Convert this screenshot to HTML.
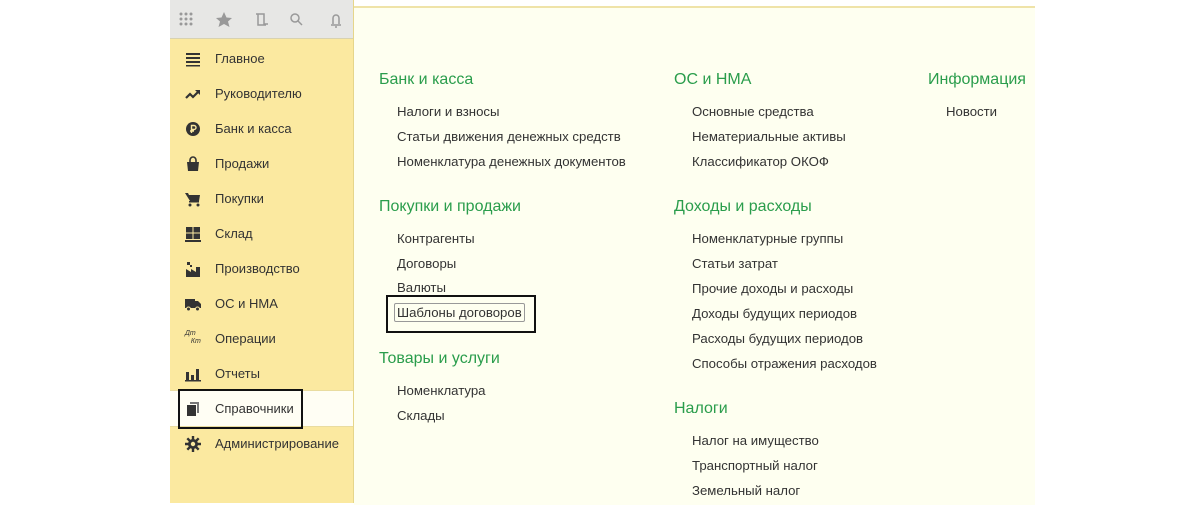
<html><head><style>
body{margin:0;width:1200px;height:507px;background:#fff;font-family:"Liberation Sans",sans-serif;position:relative;overflow:hidden}
.a{position:absolute;white-space:nowrap}
#sb{left:170px;top:0;width:183px;height:503px;background:#fbe9a0;border-right:1px solid #e6d68a}
#tb{left:170px;top:0;width:183px;height:38px;background:#e7e7e5;border-bottom:1px solid #d8d2b0}
#main{left:354px;top:6px;width:681px;height:497px;background:#fefff0;border-top:2px solid #efe3a8}
.si{font-size:13px;color:#333;left:215px}
.ic{left:185px;width:16px;height:16px}
.h{font-size:16px;color:#2a9d4c}
.i{font-size:13.2px;color:#333}
</style></head><body>
<div class="a" id="sb"></div>
<div class="a" id="tb"></div>
<div class="a" style="left:178px;top:12px">
<svg width="180" height="16"><g fill="#999">
<circle cx="3" cy="2" r="1.5"/><circle cx="8" cy="2" r="1.5"/><circle cx="13" cy="2" r="1.5"/><circle cx="3" cy="7" r="1.5"/><circle cx="8" cy="7" r="1.5"/><circle cx="13" cy="7" r="1.5"/><circle cx="3" cy="12" r="1.5"/><circle cx="8" cy="12" r="1.5"/><circle cx="13" cy="12" r="1.5"/>
<polygon points="46,0 48.5,5.5 54,6 50,9.5 51.5,15 46,12 40.5,15 42,9.5 38,6 43.5,5.5"/></g>
<g fill="none" stroke="#999" stroke-width="1.5"><path d="M78 2h8v10h4M80 2v11h8"/><circle cx="117" cy="6" r="4"/><path d="M120 9l4 4"/><path d="M153 13h10M155 12v-6a3 3 0 0 1 6 0v6M157 15h2"/></g></svg></div>
<div class="a" style="left:170px;top:390px;width:183px;height:35px;background:#fffef4;border-top:1px solid #e9dca0;border-bottom:1px solid #e9dca0"></div>
<div class="a" style="left:178px;top:389px;width:121px;height:36px;border:2px solid #111"></div>

<svg class="a ic" style="top:51px" viewBox="0 0 16 16"><g fill="#333"><rect x="1" y="2" width="14" height="2"/><rect x="1" y="6" width="14" height="2"/><rect x="1" y="10" width="14" height="2"/><rect x="1" y="14" width="14" height="1.5"/></g></svg>
<div class="a si" style="top:51px">Главное</div>
<svg class="a ic" style="top:86px" viewBox="0 0 16 16"><path d="M1 12l4-4 3 3 5-5" fill="none" stroke="#333" stroke-width="2.2"/><path d="M10 4h5v5z" fill="#333"/></svg>
<div class="a si" style="top:86px">Руководителю</div>
<svg class="a ic" style="top:121px" viewBox="0 0 16 16"><circle cx="8" cy="8" r="7" fill="#333"/><path d="M6.5 12V4.5h2.5a2 2 0 0 1 0 4H6.5M5 10h4" fill="none" stroke="#fbe9a0" stroke-width="1.4"/></svg>
<div class="a si" style="top:121px">Банк и касса</div>
<svg class="a ic" style="top:156px" viewBox="0 0 16 16"><path d="M2 6h12l-1 9H3z" fill="#333"/><path d="M5 7V4a3 3 0 0 1 6 0v3" fill="none" stroke="#333" stroke-width="1.6"/></svg>
<div class="a si" style="top:156px">Продажи</div>
<svg class="a ic" style="top:191px" viewBox="0 0 16 16"><path d="M0 2h3l1 2h11l-1 6H5z" fill="#333"/><rect x="4" y="10" width="10" height="1.5" fill="#333"/><circle cx="5" cy="14" r="1.5" fill="#333"/><circle cx="13" cy="14" r="1.5" fill="#333"/></svg>
<div class="a si" style="top:191px">Покупки</div>
<svg class="a ic" style="top:226px" viewBox="0 0 16 16"><g fill="#333"><rect x="1" y="1" width="6.5" height="5.5"/><rect x="8.5" y="1" width="6.5" height="5.5"/><rect x="1" y="7.5" width="6.5" height="5.5"/><rect x="8.5" y="7.5" width="6.5" height="5.5"/><rect x="0" y="14" width="16" height="2"/></g></svg>
<div class="a si" style="top:226px">Склад</div>
<svg class="a ic" style="top:261px" viewBox="0 0 16 16"><path d="M1 16V8l5 3V8l5 3V6h4v10z" fill="#333"/><rect x="2" y="1" width="3" height="3" fill="#333"/><rect x="5" y="4" width="2" height="2" fill="#333"/></svg>
<div class="a si" style="top:261px">Производство</div>
<svg class="a ic" style="top:296px" viewBox="0 0 16 16"><rect x="0" y="3" width="10" height="9" fill="#333"/><path d="M10 5h3l3 3v4h-6z" fill="#333"/><circle cx="3.5" cy="13" r="2" fill="#333" stroke="#fbe9a0"/><circle cx="12.5" cy="13" r="2" fill="#333" stroke="#fbe9a0"/></svg>
<div class="a si" style="top:296px">ОС и НМА</div>
<div class="a" style="left:185px;top:330px;font-size:7px;font-style:italic;color:#333;line-height:8px">Дт<br>&nbsp;&nbsp;&nbsp;Кт</div>
<div class="a si" style="top:331px">Операции</div>
<svg class="a ic" style="top:366px" viewBox="0 0 16 16"><g fill="#333"><rect x="1" y="6" width="3" height="8"/><rect x="6" y="9" width="3" height="5"/><rect x="11" y="3" width="3" height="11"/><rect x="0" y="14" width="16" height="1.5"/></g></svg>
<div class="a si" style="top:366px">Отчеты</div>
<svg class="a ic" style="top:401px" viewBox="0 0 16 16"><path d="M5 1h9v11h-2V3H5z" fill="#777"/><rect x="2" y="4" width="9" height="11" fill="#333"/></svg>
<div class="a si" style="top:401px">Справочники</div>
<svg class="a ic" style="top:436px" viewBox="0 0 16 16"><g stroke="#333" stroke-width="2.4"><path d="M8 0v16M0 8h16M2.3 2.3l11.4 11.4M13.7 2.3L2.3 13.7"/></g><circle cx="8" cy="8" r="5" fill="#333"/><circle cx="8" cy="8" r="2.2" fill="#fbe9a0"/></svg>
<div class="a si" style="top:436px">Администрирование</div>

<div class="a" id="main"></div>
<div class="a h" style="left:379px;top:71px">Банк и касса</div>
<div class="a i" style="left:397px;top:104px">Налоги и взносы</div>
<div class="a i" style="left:397px;top:129px">Статьи движения денежных средств</div>
<div class="a i" style="left:397px;top:154px">Номенклатура денежных документов</div>
<div class="a h" style="left:379px;top:198px">Покупки и продажи</div>
<div class="a i" style="left:397px;top:231px">Контрагенты</div>
<div class="a i" style="left:397px;top:256px">Договоры</div>
<div class="a i" style="left:397px;top:280px">Валюты</div>
<div class="a" style="left:386px;top:295px;width:146px;height:34px;border:2px solid #111"></div>
<div class="a i" style="left:394px;top:303px;border:1px solid #999;padding:1px 2px;border-radius:2px">Шаблоны договоров</div>
<div class="a h" style="left:379px;top:350px">Товары и услуги</div>
<div class="a i" style="left:397px;top:383px">Номенклатура</div>
<div class="a i" style="left:397px;top:408px">Склады</div>
<div class="a h" style="left:674px;top:71px">ОС и НМА</div>
<div class="a i" style="left:692px;top:104px">Основные средства</div>
<div class="a i" style="left:692px;top:129px">Нематериальные активы</div>
<div class="a i" style="left:692px;top:154px">Классификатор ОКОФ</div>
<div class="a h" style="left:674px;top:198px">Доходы и расходы</div>
<div class="a i" style="left:692px;top:231px">Номенклатурные группы</div>
<div class="a i" style="left:692px;top:256px">Статьи затрат</div>
<div class="a i" style="left:692px;top:281px">Прочие доходы и расходы</div>
<div class="a i" style="left:692px;top:306px">Доходы будущих периодов</div>
<div class="a i" style="left:692px;top:331px">Расходы будущих периодов</div>
<div class="a i" style="left:692px;top:356px">Способы отражения расходов</div>
<div class="a h" style="left:674px;top:400px">Налоги</div>
<div class="a i" style="left:692px;top:433px">Налог на имущество</div>
<div class="a i" style="left:692px;top:458px">Транспортный налог</div>
<div class="a i" style="left:692px;top:483px">Земельный налог</div>
<div class="a h" style="left:928px;top:71px">Информация</div>
<div class="a i" style="left:946px;top:104px">Новости</div>
</body></html>
